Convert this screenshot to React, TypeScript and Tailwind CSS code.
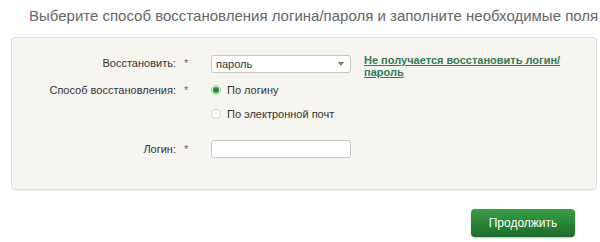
import React, { useState } from "react";

const font = { fontFamily: '"Liberation Sans", Arial, sans-serif' };

const Row = ({ label, children, className = "" }: { label?: string; children: React.ReactNode; className?: string }) => (
  <div className={`flex items-center ${className}`}>
    <div className="w-[168px] text-right text-[11px] text-[#333] pr-[4px]">{label}</div>
    <div className="w-[31px] text-[11px] text-[#666] pl-[4px]">{label ? "*" : ""}</div>
    {children}
  </div>
);

const App = () => {
  const [method, setMethod] = useState<string>("login");

  return (
    <div className="w-[600px] h-[242px] bg-white overflow-hidden" style={font}>
      <div className="h-[33px] pl-[29px] pt-[5px] text-[15px] text-[#666] whitespace-nowrap">
        Выберите способ восстановления логина/пароля и заполните необходимые поля
      </div>
      <div className="ml-[11px] mt-[4px] w-[586px] h-[153px] bg-[#f7f5f0] border border-[#e2dfd8] rounded-[4px] pt-[17px] shadow-[0_1px_1px_rgba(0,0,0,0.06)]">
        <Row label="Восстановить:" className="h-[18px] items-start">
          <div className="w-[140px] h-[18px] bg-white border border-[#c9c6c0] rounded-[3px] flex items-center justify-between pl-[4px] pr-[6px]">
            <span className="text-[11px] text-[#333]">пароль</span>
            <span className="w-0 h-0 border-l-[3px] border-r-[3px] border-t-[4px] border-l-transparent border-r-transparent border-t-[#777]" />
          </div>
          <a className="ml-[13px] -mt-[1px] text-[11px] font-bold text-[#2e7d4f] underline leading-[12px] whitespace-nowrap" href="#">
            Не получается восстановить логин/
            <br />
            пароль
          </a>
        </Row>
        <Row label="Способ восстановления:" className="mt-[9px] h-[16px]">
          <label className="flex items-center gap-[6px] text-[11px] text-[#333]" onClick={() => setMethod("login")}>
            <span className={`w-[10px] h-[10px] rounded-full border flex items-center justify-center ${method === "login" ? "border-[#9cc59f] bg-[#e3f1e3]" : "border-[#ccc] bg-white"}`}>
              {method === "login" && <span className="w-[6px] h-[6px] rounded-full bg-[#2e8b3c]" />}
            </span>
            По логину
          </label>
        </Row>
        <Row className="mt-[8px] h-[16px]">
          <label className="flex items-center gap-[6px] text-[11px] text-[#333]" onClick={() => setMethod("email")}>
            <span className={`w-[10px] h-[10px] rounded-full border flex items-center justify-center ${method === "email" ? "border-[#9cc59f] bg-[#e3f1e3]" : "border-[#d5d5d5] bg-white"}`}>
              {method === "email" && <span className="w-[6px] h-[6px] rounded-full bg-[#2e8b3c]" />}
            </span>
            По электронной почт
          </label>
        </Row>
        <Row label="Логин:" className="mt-[18px] h-[18px]">
          <input className="w-[140px] h-[18px] bg-white border border-[#c9c6c0] rounded-[3px] outline-none px-[4px] text-[11px]" />
        </Row>
      </div>
      <div className="flex justify-end pr-[25px] mt-[19px]">
        <button className="w-[104px] h-[28px] rounded-[4px] bg-gradient-to-b from-[#37a144] to-[#1a6b2a] text-white text-[12px] shadow-[0_1px_2px_rgba(0,0,0,0.25)]">
          Продолжить
        </button>
      </div>
    </div>
  );
};

export default App;
